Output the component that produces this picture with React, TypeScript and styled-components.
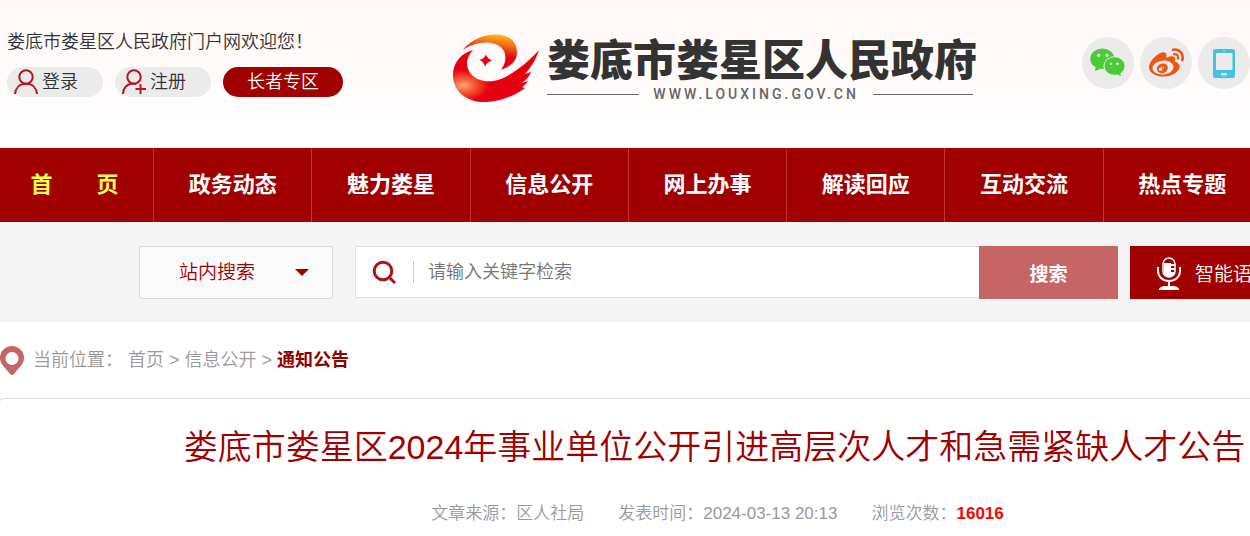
import React from "react";
import styled, { createGlobalStyle } from "styled-components";
import { FaWeibo } from "react-icons/fa";

const red = "#a00000";
const softRed = "#c66565";

const GlobalStyle = createGlobalStyle`
  *, *::before, *::after { box-sizing: border-box; }
  body {
    margin: 0;
    background: #fff;
    color: #333;
    font-family: "Liberation Sans", "Noto Sans CJK SC", sans-serif;
    font-size: 18px;
    font-weight: 350;
  }
  a { color: inherit; text-decoration: none; }
  button, input, select { font: inherit; }
`;

const Page = styled.div`
  overflow: hidden;
`;

const Header = styled.header`
  display: flex;
  align-items: flex-start;
  height: 148px;
  padding: 28px 0 0 7px;
  background: linear-gradient(#fff7f6, #fffdfd 110px, #fff 120px);
`;

const Account = styled.div`
  display: flex;
  flex-direction: column;
  gap: 10px;
`;

const Welcome = styled.p`
  margin: 0;
  line-height: 29px;
  white-space: nowrap;
`;

const AccountLinks = styled.div`
  display: flex;
  gap: 12px;
`;

const Pill = styled.a<{ $strong?: boolean }>`
  display: flex;
  align-items: center;
  justify-content: ${(p) => (p.$strong ? "center" : "flex-start")};
  gap: 4px;
  width: ${(p) => (p.$strong ? 120 : 96)}px;
  height: 30px;
  padding-left: ${(p) => (p.$strong ? 0 : 7)}px;
  border-radius: 15px;
  background: ${(p) => (p.$strong ? red : "#ebebeb")};
  color: ${(p) => (p.$strong ? "#fff" : "#333")};
  line-height: 30px;

  svg { flex: none; }
`;

const Brand = styled.a`
  display: flex;
  gap: 6px;
  margin: 4px 0 0 110px;
`;

const BrandText = styled.div`
  display: flex;
  flex-direction: column;
  width: 430px;
`;

const BrandName = styled.span`
  font-family: "Noto Sans CJK SC", sans-serif;
  font-size: 43px;
  font-weight: 900;
  line-height: 50px;
  white-space: nowrap;
`;

const BrandSite = styled.span`
  display: flex;
  align-items: center;
  gap: 14px;
  padding-right: 4px;
  color: #666;
  font-family: Roboto, sans-serif;
  font-size: 14px;
  font-weight: 500;
  letter-spacing: 3px;
  line-height: 24px;

  &::before, &::after {
    content: "";
    flex: 12;
    height: 1px;
    background: #666;
  }

  &::after { flex: 13; }
`;

const Social = styled.div`
  display: flex;
  gap: 6px;
  margin: 9px 0 0 auto;
`;

const SocialLink = styled.a<{ $color: string }>`
  display: flex;
  align-items: center;
  justify-content: center;
  width: 52px;
  height: 52px;
  border-radius: 50%;
  background: #ebebeb;
  color: ${(p) => p.$color};
`;

const Nav = styled.nav`
  display: grid;
  grid-template-columns: 154px repeat(7, 1fr);
  margin-right: -12px;
  background: ${red};
`;

const NavLink = styled.a<{ $active?: boolean }>`
  padding-right: ${(p) => (p.$active ? 4 : 0)}px;
  border-right: 1px solid #bf3333;
  color: ${(p) => (p.$active ? "#ffff4d" : "#fff")};
  font-size: 22px;
  font-weight: 700;
  line-height: 74px;
  text-align: center;
  white-space: pre;
`;

const SearchBar = styled.form`
  display: flex;
  height: 100px;
  padding: 24px 0 0 139px;
  background: #f4f4f4;
`;

const ScopeBox = styled.label`
  position: relative;
  flex: none;
  width: 194px;
  height: 53px;
  margin-right: 22px;
  color: ${red};

  svg {
    position: absolute;
    top: 23px;
    right: 24px;
    pointer-events: none;
  }
`;

const Scope = styled.select`
  appearance: none;
  width: 100%;
  height: 100%;
  padding: 0 40px 0 39px;
  border: 1px solid #d9d9d9;
  border-radius: 2px;
  background: #fafafa;
  color: ${red};
  font-size: 19px;
`;

const Field = styled.label`
  display: flex;
  flex: 1;
  align-items: center;
  min-width: 0;
  height: 52px;
  padding-left: 16px;
  border: 1px solid #ddd;
  border-right: 0;
  background: #fff;
`;

const Keyword = styled.input`
  flex: 1;
  min-width: 0;
  height: 22px;
  margin-left: 17px;
  padding: 0 0 0 14px;
  border: 0;
  border-left: 1px solid #ccc;
  outline: 0;
  background: none;

  &::placeholder { color: #757575; }
`;

const SearchButton = styled.button`
  width: 139px;
  height: 53px;
  border: 0;
  background: ${softRed};
  color: #fff;
  font-size: 19px;
  font-weight: 700;
`;

const VoiceBox = styled.div`
  flex: none;
  width: 120px;
  margin-left: 12px;
`;

const VoiceButton = styled.button`
  display: flex;
  align-items: center;
  gap: 13px;
  width: 170px;
  height: 53px;
  padding: 0 0 0 26px;
  border: 0;
  background: ${red};
  color: #fff;
  font-size: 19px;
  white-space: nowrap;
`;

const Breadcrumb = styled.nav`
  display: flex;
  align-items: center;
  gap: 5px;
  height: 76px;
  color: #999;
  line-height: 28px;

  svg { margin-right: 4px; }
  strong { color: #900000; font-weight: 700; }
`;

const Article = styled.article`
  margin: 0 -182px 0 -3px;
  min-height: 138px;
  border: 1px solid #ddd;
  border-bottom: 0;
  border-radius: 8px 8px 0 0;
  text-align: center;
`;

const Title = styled.h1`
  margin: 22px 0 0;
  color: ${red};
  font-size: 34px;
  font-weight: 350;
  line-height: 52px;
  white-space: nowrap;
`;

const Meta = styled.div`
  display: flex;
  justify-content: center;
  gap: 34px;
  margin-top: 28px;
  padding-left: 6px;
  color: #999;
  font-size: 17px;
  line-height: 26px;

  b { color: #f00; font-weight: 700; }
`;

const UserIcon = ({ add }: { add?: boolean }) => (
  <svg width="24" height="26" viewBox="0 0 24 26" fill="none" stroke="#b01822" strokeWidth="2" aria-hidden="true">
    <circle cx="12" cy="8" r="6.7" />
    {add ? (
      <>
        <path d="M1 25c.3-5.500 3.500-9.500 9-10.500 1.500 0 3 .1 4.200.6" />
        <path d="M18.500 15v10M13.500 20h10.500" />
      </>
    ) : (
      <path d="M1 25c.5-6 4.500-10.300 11-10.300S22.500 19 23 25" />
    )}
  </svg>
);

const Emblem = () => (
  <svg width="88" height="70" viewBox="0 0 88 70" aria-hidden="true">
    <defs>
      <linearGradient id="crest" x1="0.75" y1="0" x2="0.6" y2="0.6">
        <stop offset="0" stopColor="#fdc010" />
        <stop offset="0.45" stopColor="#f2701a" />
        <stop offset="1" stopColor="#e60012" />
      </linearGradient>
      <radialGradient id="body" cx="0.12" cy="0.68" r="0.3">
        <stop offset="0" stopColor="#ffa873" />
        <stop offset="0.5" stopColor="#f4502f" />
        <stop offset="1" stopColor="#e60012" />
      </radialGradient>
    </defs>
    <path fill="url(#crest)" d="M10 17.500C18 8 30 2.500 43 2.500c13 0 21 7 21 18 0 8-6 14-16 17 5-6 6-14 2-20C43 8 25 8 10 17.500Z" />
    <path fill="url(#body)" d="M20 18C13 25 12 35 18 42c7 8 19 9 30 5 14-6 27-17 38-29-3 9-7 16-14 24 3-1 5-2 6-2-2 5-5 8-9 11l6-2c-2 3-4 5-6 6l3 1C60 65 43 71 27 70 11 68 0 58 0 43c0-12 8-22 20-25Z" />
    <path fill="#e60012" d="M33 22.500c1 3 3 5 6 6-3 1-6 3-7 6-1-3-3-6-6-7 3 0 6-2 7-5Z" />
  </svg>
);

const WechatIcon = () => (
  <svg width="52" height="52" viewBox="0 0 52 52" aria-hidden="true">
    <ellipse cx="20.300" cy="21.800" rx="12" ry="10.300" fill="currentColor" />
    <path d="m14 28-1 6 7-3Z" fill="currentColor" />
    <ellipse cx="32.500" cy="29" rx="10.600" ry="9.300" fill="currentColor" stroke="#ebebeb" />
    <path d="m34 37 5 2-1-4Z" fill="currentColor" />
    <g fill="#ebebeb">
      <circle cx="16.700" cy="18.300" r="1.700" />
      <circle cx="25" cy="18.300" r="1.700" />
      <circle cx="29" cy="26.700" r="1.300" />
      <circle cx="35.500" cy="26.700" r="1.300" />
    </g>
  </svg>
);

const TabletIcon = () => (
  <svg width="24" height="30" viewBox="0 0 24 30" aria-hidden="true">
    <rect x="1" y="1" width="22" height="29" rx="2.500" fill="#45c1e2" />
    <rect x="4" y="5" width="16.500" height="17" rx="1" fill="#ebebeb" />
    <rect x="9" y="25" width="6" height="2.500" rx="1" fill="#ebebeb" />
    <circle cx="12" cy="3" r=".7" fill="#ebebeb" />
  </svg>
);

const SearchIcon = () => (
  <svg width="24" height="24" viewBox="0 0 24 24" fill="none" stroke="#a8141c" strokeWidth="3" aria-hidden="true">
    <circle cx="11" cy="11" r="8.800" />
    <path d="m17 17 6 6" />
  </svg>
);

const MicIcon = () => (
  <svg width="26" height="34" viewBox="0 0 26 34" fill="none" stroke="#fff" strokeWidth="2" aria-hidden="true">
    <rect x="7" y="2" width="12" height="19" rx="6" strokeWidth="1.500" />
    <path fill="#fff" stroke="none" d="M8 7h7v1h4v2h-4v2h4v2h-4v2h4c-1 3-3 5-6 5s-5-2-5-5Z" />
    <path d="M2 11v4c0 6 5 10 11 10s11-4 11-10v-4M13 25v5" />
    <path fill="#fff" stroke="none" d="M3 34c0-3 3-4 7-4h6c4 0 7 1 7 4Z" />
  </svg>
);

const PinIcon = () => (
  <svg width="24" height="29" viewBox="0 0 24 29" aria-hidden="true">
    <path fill={softRed} fillRule="evenodd" d="M12 0a12 12 0 0 1 12 12c0 7-7 11-10 16q-2 2-4 0C7 23 0 19 0 12A12 12 0 0 1 12 0Zm0 6a6.500 6.500 0 1 0 0 13 6.500 6.500 0 0 0 0-13Z" />
  </svg>
);

const sections = ["政务动态", "魅力娄星", "信息公开", "网上办事", "解读回应", "互动交流", "热点专题"];

export default function App() {
  return (
    <Page>
      <GlobalStyle />
      <Header>
        <Account>
          <Welcome>娄底市娄星区人民政府门户网欢迎您！</Welcome>
          <AccountLinks>
            <Pill href="#login"><UserIcon />登录</Pill>
            <Pill href="#register"><UserIcon add />注册</Pill>
            <Pill href="#senior" $strong>长者专区</Pill>
          </AccountLinks>
        </Account>
        <Brand href="#home">
          <Emblem />
          <BrandText>
            <BrandName>娄底市娄星区人民政府</BrandName>
            <BrandSite>WWW.LOUXING.GOV.CN</BrandSite>
          </BrandText>
        </Brand>
        <Social>
          <SocialLink href="#wechat" $color="#4ccb38" aria-label="微信"><WechatIcon /></SocialLink>
          <SocialLink href="#weibo" $color="#ee5512" aria-label="微博"><FaWeibo size={35} /></SocialLink>
          <SocialLink href="#mobile" $color="#45c1e2" aria-label="手机版"><TabletIcon /></SocialLink>
        </Social>
      </Header>

      <Nav>
        <NavLink href="#home" $active>首　　页</NavLink>
        {sections.map((name) => (
          <NavLink key={name} href={`#${name}`}>{name}</NavLink>
        ))}
      </Nav>

      <SearchBar onSubmit={(e) => e.preventDefault()}>
        <ScopeBox>
          <Scope aria-label="搜索范围">
            <option>站内搜索</option>
          </Scope>
          <svg width="14" height="7" viewBox="0 0 14 7" aria-hidden="true">
            <path d="M0 0h14L7 7Z" fill={red} />
          </svg>
        </ScopeBox>
        <Field>
          <SearchIcon />
          <Keyword type="text" placeholder="请输入关键字检索" aria-label="关键字" />
        </Field>
        <SearchButton type="submit">搜索</SearchButton>
        <VoiceBox>
          <VoiceButton type="button"><MicIcon />智能语音</VoiceButton>
        </VoiceBox>
      </SearchBar>

      <Breadcrumb>
        <PinIcon />
        <span>当前位置：</span>
        <a href="#home">首页</a>
        <span>&gt;</span>
        <a href="#info">信息公开</a>
        <span>&gt;</span>
        <strong>通知公告</strong>
      </Breadcrumb>

      <Article>
        <Title>娄底市娄星区2024年事业单位公开引进高层次人才和急需紧缺人才公告</Title>
        <Meta>
          <span>文章来源：区人社局</span>
          <span>发表时间：2024-03-13 20:13</span>
          <span>浏览次数：<b>16016</b></span>
        </Meta>
      </Article>
    </Page>
  );
}
